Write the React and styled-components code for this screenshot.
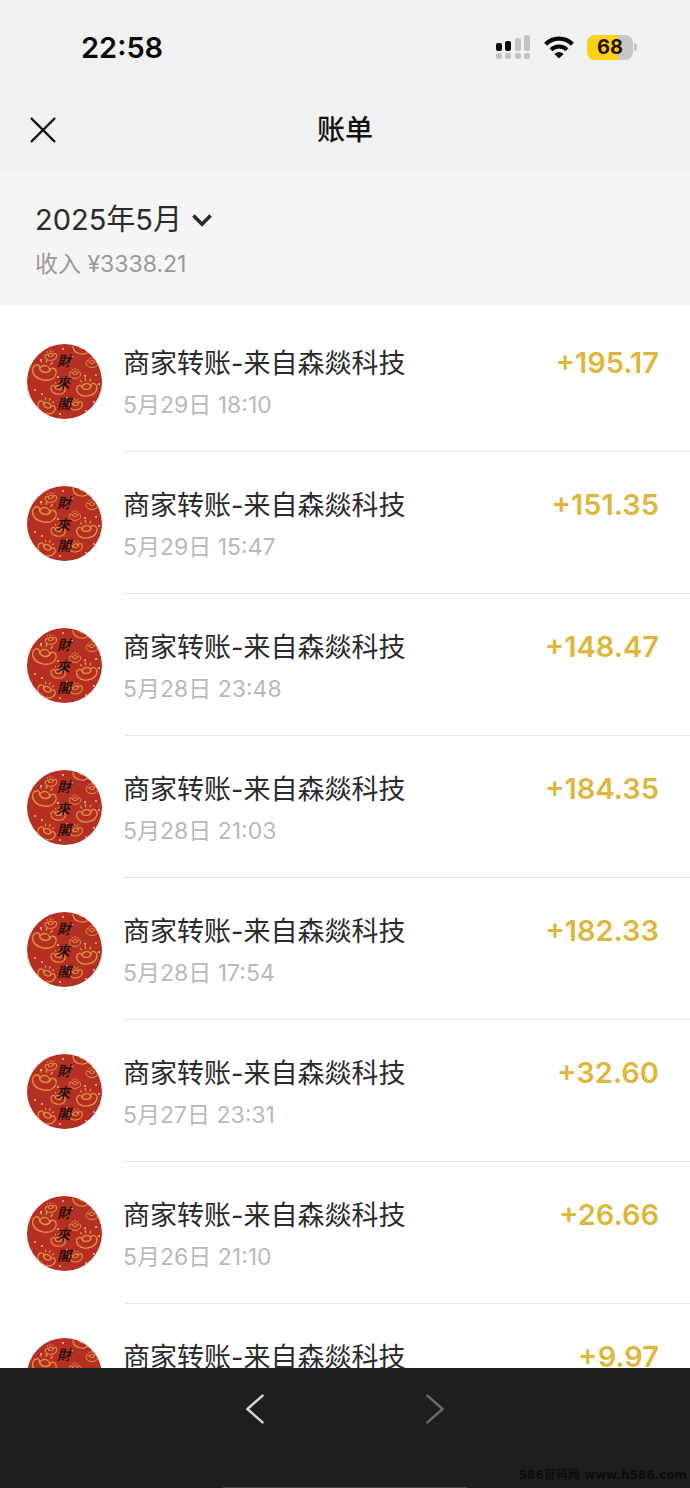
import styled, { createGlobalStyle } from "styled-components";

const GlobalStyle = createGlobalStyle`
  * {
    box-sizing: border-box;
  }

  body {
    margin: 0;
    background: #fff;
    color: #2b2b2b;
    font-family: Inter, "Noto Sans CJK SC", sans-serif;
  }

  button {
    padding: 0;
    border: 0;
    background: none;
    color: inherit;
    font: inherit;
    cursor: pointer;
  }

  svg {
    display: block;
  }
`;

const Screen = styled.div`
  display: flex;
  flex-direction: column;
  height: 100vh;
`;

const Header = styled.header`
  flex: none;
  padding: 2px 0;
  background: #f1f1f1;
`;

const StatusBar = styled.div`
  display: flex;
  align-items: center;
  justify-content: space-between;
  height: 90px;
  padding: 0 53px 0 81px;
  color: #0a0a0a;
`;

const Clock = styled.time`
  font-size: 29px;
  font-weight: 600;
`;

const StatusIcons = styled.div`
  display: flex;
  align-items: center;
  gap: 13px;
`;

const Battery = styled.div`
  display: flex;
  align-items: center;
  gap: 1px;
`;

const BatteryLevel = styled.div`
  width: 46px;
  border-radius: 8px;
  background: linear-gradient(to right, #fbd210 ${p => p.$level}%, #c6c6c6 ${p => p.$level}%);
  color: #2a1408;
  font-size: 20px;
  font-weight: 700;
  line-height: 25px;
  text-align: center;
`;

const BatteryTip = styled.div`
  width: 3px;
  height: 8px;
  border-radius: 0 4px 4px 0;
  background: #c6c6c6;
`;

const TitleBar = styled.div`
  display: grid;
  grid-template-columns: 1fr auto 1fr;
  align-items: center;
  height: 76px;
  padding: 0 30px;
`;

const CloseButton = styled.button`
  justify-self: start;
  color: #111;
`;

const Title = styled.h1`
  margin: 0;
  color: #111;
  font-size: 28px;
  font-weight: 500;
  line-height: 44px;
`;

const Summary = styled.section`
  flex: none;
  padding: 28px 35px 20px;
  background: #f5f5f5;
`;

const MonthButton = styled.button`
  display: flex;
  align-items: center;
  gap: 10px;
  font-size: 29px;
  line-height: 44px;
`;

const Income = styled.p`
  margin: 0;
  color: #999;
  font-size: 23px;
  line-height: 44px;
`;

const BillList = styled.ul`
  flex: 1;
  min-height: 0;
  margin: 0;
  padding: 4px 0 0;
  overflow: hidden;
  list-style: none;
`;

const BillRow = styled.li`
  display: flex;
  gap: 21px;
  height: 142px;
  padding-left: 27px;
`;

const AvatarBox = styled.div`
  flex: none;
  width: 75px;
  padding-top: 34px;
`;

const BillBody = styled.div`
  display: flex;
  flex: 1;
  justify-content: space-between;
  padding: 34px 31px 0 0;
  border-bottom: 1px solid #e6e6e6;
  line-height: 38px;
`;

const BillText = styled.div`
  display: flex;
  flex-direction: column;
  gap: 2px;
`;

const BillName = styled.span`
  font-size: 27px;
  line-height: 40px;
`;

const BillTime = styled.time`
  color: #b9b9b9;
  font-size: 23px;
`;

const Amount = styled.span`
  color: #dfb63c;
  font-size: 29px;
  font-weight: 600;
`;

const Footer = styled.footer`
  position: relative;
  display: flex;
  flex: none;
  flex-direction: column;
  justify-content: space-between;
  align-items: center;
  height: 120px;
  padding-top: 26px;
  background: #1e1e1e;
`;

const PageNav = styled.nav`
  display: flex;
  gap: 160px;
`;

const PageButton = styled.button`
  color: ${p => p.disabled ? "#6a6a6a" : "#d6d6d6"};
`;

const HomeIndicator = styled.div`
  width: 244px;
  height: 1px;
  background: #4a4a4a;
`;

const Watermark = styled.span`
  position: absolute;
  right: 3px;
  bottom: 4px;
  color: #0c0c0c;
  font: 700 12px/18px "DejaVu Sans", "Noto Sans CJK SC", sans-serif;
`;

const bills = [
  { date: "5月29日", time: "18:10", amount: "195.17" },
  { date: "5月29日", time: "15:47", amount: "151.35" },
  { date: "5月28日", time: "23:48", amount: "148.47" },
  { date: "5月28日", time: "21:03", amount: "184.35" },
  { date: "5月28日", time: "17:54", amount: "182.33" },
  { date: "5月27日", time: "23:31", amount: "32.60" },
  { date: "5月26日", time: "21:10", amount: "26.66" },
  { date: "5月26日", time: "18:22", amount: "9.97" },
];

// x, y, scale, rotation
const ingots = [
  [17, 29, 1, 12],
  [60, 46, 0.85, -8],
  [54, 5, 0.7, 14],
  [65, 20, 0.5, 0],
  [31, 46, 0.6, 8],
  [48, 31, 0.48, 0],
  [19, 64, 0.75, 24],
  [49, 62, 0.55, -10],
  [24, 13, 0.48, -8],
];

const sparks = [
  [36, 5], [14, 16], [45, 13], [8, 46], [15, 50], [40, 54], [58, 32],
  [69, 31], [67, 58], [33, 70], [42, 20], [31, 33], [59, 67], [72, 40],
];

const SignalIcon = () => (
  <svg width="35" height="25" viewBox="0 0 35 25" aria-label="信号">
    <rect x="0" y="8" width="6" height="8" rx="2" fill="#0a0a0a" />
    <rect x="9" y="6" width="6" height="10" rx="2" fill="#0a0a0a" />
    <rect x="19" y="3" width="6" height="13" rx="2" fill="#c4c4c4" />
    <rect x="28" y="0" width="6" height="16" rx="2" fill="#c4c4c4" />
    {[0, 9, 19, 28].map(x => (
      <rect key={x} x={x} y="18" width="6" height="6" rx="2" fill="#c4c4c4" />
    ))}
  </svg>
);

const WifiIcon = () => (
  <svg width="30" height="23" viewBox="0 0 30 23" fill="none" stroke="currentColor" aria-label="无线网络">
    <path d="M1.6 8.2a19 19 0 0 1 26.8 0" strokeWidth="4.4" />
    <path d="M7 13.8a11.4 11.4 0 0 1 16 0" strokeWidth="4.2" />
    <path d="M15 22.6l-4.6-4.6a6.4 6.4 0 0 1 9.2 0z" fill="currentColor" stroke="none" />
  </svg>
);

const CloseIcon = () => (
  <svg width="26" height="26" viewBox="0 0 26 26" fill="none" stroke="currentColor" strokeWidth="2.2" strokeLinecap="round">
    <path d="M1.6 1.6l22.8 22.8M24.4 1.6L1.6 24.4" />
  </svg>
);

const ChevronDown = () => (
  <svg width="20" height="13" viewBox="0 0 20 13" fill="none" stroke="currentColor" strokeWidth="3.6">
    <path d="M1.4 1.6L10 10.2l8.6-8.6" />
  </svg>
);

const PageArrow = ({ d }) => (
  <svg width="20" height="30" viewBox="0 0 20 30" fill="none" stroke="currentColor" strokeWidth="2.4" strokeLinecap="round" strokeLinejoin="round">
    <path d={d} />
  </svg>
);

const Avatar = () => (
  <svg width="75" height="75" viewBox="0 0 75 75">
    <clipPath id="face"><circle cx="37.5" cy="37.5" r="37.5" /></clipPath>
    <g clipPath="url(#face)">
      <rect width="75" height="75" fill="#b53023" />
      {ingots.map(([x, y, scale, angle]) => (
        <g
          key={`${x}-${y}`}
          transform={`translate(${x} ${y}) rotate(${angle}) scale(${scale})`}
          fill="none"
          stroke="#e0943f"
          strokeWidth={1.4 / Math.sqrt(scale)}
          strokeLinecap="round"
        >
          <path d="M-10-6c-4 3-2 13 10 13S14-3 10-6c-3-2-5 1-5 3-2 3-8 3-10 0 0-2-2-5-5-3z" />
          <path d="M-5-3c0-6 10-6 10 0" />
          <path d="M-5-10l-1-2M0-11v-3M5-10l1-2" />
        </g>
      ))}
      {sparks.map(([x, y]) => (
        <circle key={`${x}-${y}`} cx={x} cy={y} r="0.9" fill="#f0c9a0" />
      ))}
      <g fill="#1b0d0b" fontFamily='"Noto Sans CJK TC", sans-serif' fontSize="14" fontWeight="500" fontStyle="italic" textAnchor="middle">
        <text x="37" y="22">財</text>
        <text x="36" y="44">來</text>
        <text x="37" y="65">閣</text>
      </g>
    </g>
  </svg>
);

export default function App() {
  return (
    <>
      <GlobalStyle />
      <Screen>
        <Header>
          <StatusBar>
            <Clock>22:58</Clock>
            <StatusIcons>
              <SignalIcon />
              <WifiIcon />
              <Battery>
                <BatteryLevel $level={68}>68</BatteryLevel>
                <BatteryTip />
              </Battery>
            </StatusIcons>
          </StatusBar>
          <TitleBar>
            <CloseButton type="button" aria-label="关闭"><CloseIcon /></CloseButton>
            <Title>账单</Title>
          </TitleBar>
        </Header>

        <Summary>
          <MonthButton type="button">2025年5月<ChevronDown /></MonthButton>
          <Income>收入 ¥3338.21</Income>
        </Summary>

        <BillList>
          {bills.map(bill => (
            <BillRow key={bill.date + bill.time}>
              <AvatarBox><Avatar /></AvatarBox>
              <BillBody>
                <BillText>
                  <BillName>商家转账-来自森燚科技</BillName>
                  <BillTime>{bill.date} {bill.time}</BillTime>
                </BillText>
                <Amount>+{bill.amount}</Amount>
              </BillBody>
            </BillRow>
          ))}
        </BillList>

        <Footer>
          <PageNav>
            <PageButton type="button" aria-label="后退"><PageArrow d="M17.6 1.6L2.4 15l15.2 13.4" /></PageButton>
            <PageButton type="button" aria-label="前进" disabled><PageArrow d="M2.4 1.6L17.6 15 2.4 28.4" /></PageButton>
          </PageNav>
          <HomeIndicator />
          <Watermark>586首码网 www.h586.com</Watermark>
        </Footer>
      </Screen>
    </>
  );
}
